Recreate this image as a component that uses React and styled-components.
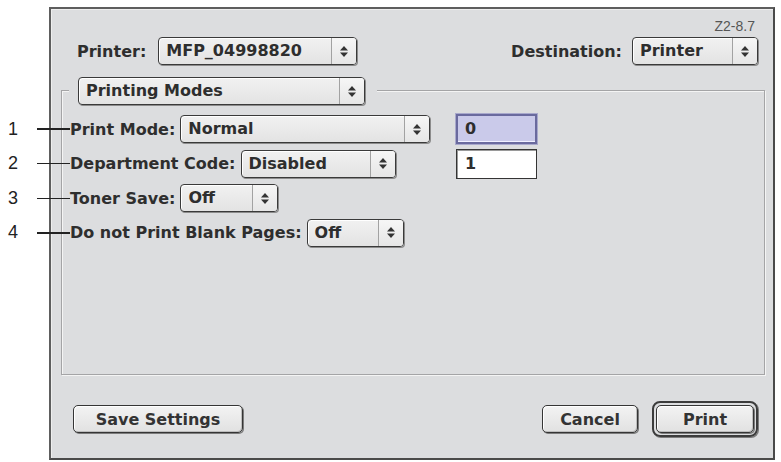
import React from 'react';
import styled, { createGlobalStyle } from 'styled-components';

const GlobalStyle = createGlobalStyle`
  body {
    margin: 0;
    background: #ffffff;
  }
`;

const Page = styled.div`
  width: 781px;
  height: 462px;
  padding: 7px 0 0 49px;
  box-sizing: border-box;
  font-family: "DejaVu Sans", "Liberation Sans", sans-serif;
`;

const Dialog = styled.div`
  display: flex;
  flex-direction: column;
  width: 726px;
  height: 453px;
  box-sizing: border-box;
  border: 2px solid #5e5e5e;
  border-right-color: #4a4a4a;
  border-bottom-color: #4a4a4a;
  background: #dcdddf;
  box-shadow: inset 1px 1px 0 #eeeeee;
`;

const Version = styled.div`
  margin-top: 10px;
  padding-right: 18px;
  height: 14px;
  line-height: 14px;
  text-align: right;
  font-family: "Liberation Sans", Arial, sans-serif;
  font-size: 14px;
  color: #555;
`;

const Header = styled.div`
  display: flex;
  align-items: center;
  height: 28px;
  margin-top: 4px;
  padding: 0 15px 0 26px;
`;

const Field = styled.div`
  display: flex;
  align-items: center;
  gap: ${p => p.$gap || 5}px;
  margin-left: ${p => (p.$right ? 'auto' : '0')};
`;

const Label = styled.span`
  font-size: 16px;
  font-weight: bold;
  color: #2e2e2e;
  white-space: nowrap;
`;

const PopupBox = styled.div`
  display: flex;
  width: ${p => p.$w}px;
  height: 28px;
  box-sizing: border-box;
  border: 1px solid #3a3a3a;
  border-radius: 4px;
  background: linear-gradient(#f1f1f1, #e3e3e3);
  box-shadow: 1px 1px 0 #8c8c8c, inset 1px 1px 0 #ffffff;
  overflow: hidden;
`;

const PopupValue = styled.span`
  flex: 1;
  padding-left: 7px;
  line-height: 26px;
  font-size: 16px;
  font-weight: bold;
  color: #2e2e2e;
  white-space: nowrap;
  overflow: hidden;
`;

const PopupArrows = styled.span`
  display: flex;
  align-items: center;
  justify-content: center;
  width: 24px;
  border-left: 1px solid #a2a2a2;
  background: linear-gradient(#f6f6f6, #e6e6e6);
`;

const Arrows = () => (
  <svg width="8" height="11" viewBox="0 0 8 11">
    <polygon points="0,4.5 4,0 8,4.5" fill="#333" />
    <polygon points="0,6.5 4,11 8,6.5" fill="#333" />
  </svg>
);

const Popup = ({ w, children }) => (
  <PopupBox $w={w}>
    <PopupValue>{children}</PopupValue>
    <PopupArrows>
      <Arrows />
    </PopupArrows>
  </PopupBox>
);

const Group = styled.div`
  height: 285px;
  margin: 25px 8px 0 10px;
  box-sizing: border-box;
  border: 1px solid #a4a4a6;
  box-shadow: 1px 1px 0 #f4f4f4, inset 1px 1px 0 #f4f4f4;
`;

const GroupTitle = styled.div`
  width: fit-content;
  margin: -14px 0 0 7px;
  padding: 0 12px 0 9px;
  background: #dcdddf;
`;

const Grid = styled.div`
  display: grid;
  grid-template-columns: 386px auto;
  grid-auto-rows: 28px;
  row-gap: 6.67px;
  margin-top: 10px;
  padding-left: 8px;
`;

const Row = styled.div`
  position: relative;
  display: flex;
  align-items: center;
  gap: 5px;
  grid-column: 1;
`;

const Callout = styled.div`
  position: absolute;
  left: -62px;
  top: 0;
  height: 100%;
  display: flex;
  align-items: center;
`;

const CalloutNumber = styled.span`
  width: 10px;
  font-family: "Liberation Sans", Arial, sans-serif;
  font-size: 18px;
  color: #222;
`;

const CalloutLine = styled.span`
  width: 33px;
  height: 1.5px;
  margin-left: 19px;
  background: #222;
`;

const TextField = styled.div`
  grid-column: 2;
  grid-row: ${p => p.$row};
  align-self: center;
  width: 81px;
  height: 30px;
  box-sizing: border-box;
  padding-left: ${p => (p.$focused ? 7 : 8)}px;
  border: ${p => (p.$focused ? '2px solid #6a6a9e' : '1px solid #343434')};
  background: ${p => (p.$focused ? '#cacaea' : '#ffffff')};
  box-shadow: ${p => (p.$focused ? '0 0 0 1px #a8a8cc, inset 0 -1px 0 #f0f0ff' : 'inset 1px 1px 0 #9a9a9a')};
  line-height: ${p => (p.$focused ? 26 : 28)}px;
  font-size: 16px;
  font-weight: bold;
  color: #2e2e2e;
`;

const Footer = styled.div`
  display: flex;
  align-items: center;
  height: 36px;
  margin-top: 26px;
  padding: 0 15px 0 22px;
`;

const Button = styled.button`
  width: ${p => p.$w}px;
  height: 28px;
  margin-left: ${p => p.$ml || 0}px;
  padding: 0;
  box-sizing: border-box;
  border: 1px solid #353535;
  border-radius: 5px;
  background: linear-gradient(#f3f3f3, #e1e1e1);
  box-shadow: 1px 1px 0 #7c7c7c, inset 1px 1px 0 #ffffff, inset -1px -1px 0 #bdbdbd;
  font-family: "DejaVu Sans", "Liberation Sans", sans-serif;
  font-size: 16px;
  font-weight: bold;
  color: #333;
`;

const DefaultRing = styled.div`
  display: flex;
  margin-left: 14px;
  padding: 2px;
  border: 2px solid #3c3c3c;
  border-radius: 8px;
  box-shadow: 1px 1px 0 #7c7c7c;
`;

const rows = [
  { n: 1, label: 'Print Mode:', value: 'Normal', w: 250 },
  { n: 2, label: 'Department Code:', value: 'Disabled', w: 155 },
  { n: 3, label: 'Toner Save:', value: 'Off', w: 98 },
  { n: 4, label: 'Do not Print Blank Pages:', value: 'Off', w: 97 },
];

const App = () => {
  return (
    <Page>
      <GlobalStyle />
      <Dialog>
        <Version>Z2-8.7</Version>
        <Header>
          <Field $gap={12}>
            <Label>Printer:</Label>
            <Popup w={199}>MFP_04998820</Popup>
          </Field>
          <Field $gap={10} $right>
            <Label>Destination:</Label>
            <Popup w={126}>Printer</Popup>
          </Field>
        </Header>
        <Group>
          <GroupTitle>
            <Popup w={287}>Printing Modes</Popup>
          </GroupTitle>
          <Grid>
            {rows.map((r, i) => (
              <Row key={r.n} style={{ gridRow: i + 1 }}>
                <Callout>
                  <CalloutNumber>{r.n}</CalloutNumber>
                  <CalloutLine />
                </Callout>
                <Label>{r.label}</Label>
                <Popup w={r.w}>{r.value}</Popup>
              </Row>
            ))}
            <TextField $row={1} $focused>0</TextField>
            <TextField $row={2}>1</TextField>
          </Grid>
        </Group>
        <Footer>
          <Button $w={170}>Save Settings</Button>
          <Button $w={96} style={{ marginLeft: 'auto' }}>Cancel</Button>
          <DefaultRing>
            <Button $w={98}>Print</Button>
          </DefaultRing>
        </Footer>
      </Dialog>
    </Page>
  );
};

export default App;
